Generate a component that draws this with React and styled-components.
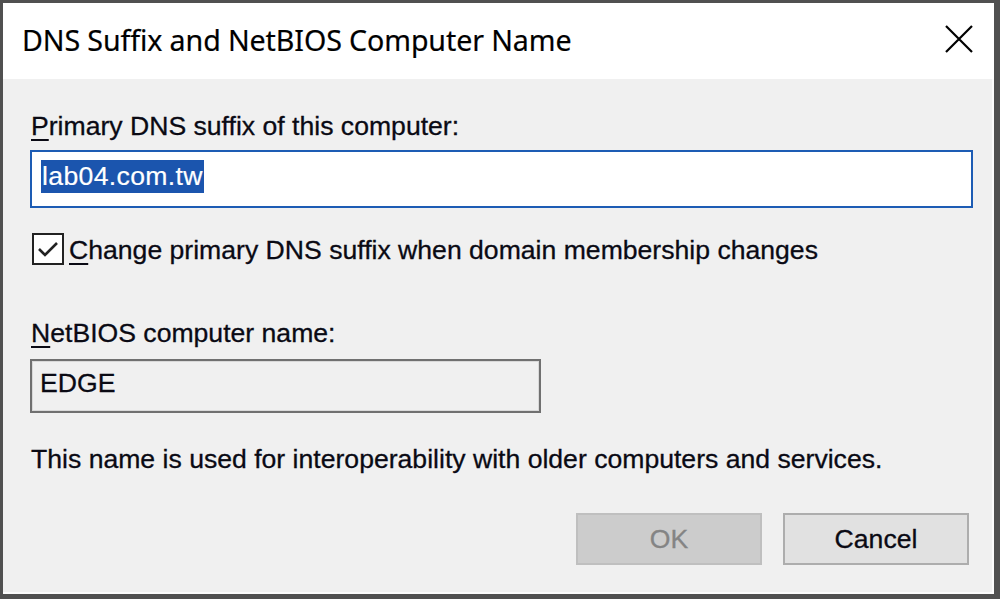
import React from 'react';
import styled, { createGlobalStyle } from 'styled-components';

const GlobalStyle = createGlobalStyle`
  html, body {
    margin: 0;
    padding: 0;
    background: #4d4d4d;
  }
`;

const Window = styled.div`
  width: 1000px;
  height: 599px;
  box-sizing: border-box;
  display: flex;
  flex-direction: column;
  border-style: solid;
  border-color: #505050;
  border-width: 3px 6px 5px 3px;
  background: #f0f0f0;
  box-shadow: inset -2px -2px 0 #fbfbfb;
  overflow: hidden;
`;

const TitleBar = styled.div`
  height: 76px;
  flex: none;
  display: flex;
  align-items: center;
  justify-content: space-between;
  padding: 0 19px 0 19px;
  background: #ffffff;
`;

const Title = styled.div`
  font-family: 'Noto Sans', 'Open Sans', sans-serif;
  font-size: 28.6px;
  letter-spacing: -0.1px;
  color: #000;
  margin-top: -4px;
  -webkit-text-stroke: 0.2px #000;
`;

const CloseButton = styled.button`
  width: 32px;
  height: 32px;
  padding: 0;
  border: none;
  background: none;
  display: flex;
  align-items: center;
  justify-content: center;
  margin-top: -4px;
`;

const Body = styled.div`
  flex: 1;
  display: flex;
  flex-direction: column;
  padding: 32px 25px 0 27px;
  font-family: 'Liberation Sans', Arial, sans-serif;
  font-size: 26.6px;
  color: #0a0a14;
  -webkit-text-stroke: 0.3px #0a0a14;
`;

const Label = styled.div`
  line-height: 30px;
  margin-top: ${p => p.gap || 0}px;
  padding-left: 1px;
`;

const Key = styled.span`
  text-decoration: underline;
  text-decoration-thickness: 2px;
  text-underline-offset: 4px;
`;

const TextField = styled.div`
  margin-top: 9px;
  height: 58px;
  box-sizing: border-box;
  border: 2px solid #1d5cb4;
  background: #fff;
  padding: 8px 0 0 9px;
  width: ${p => p.width}px;
`;

const Selected = styled.span`
  display: inline-block;
  line-height: 33px;
  padding: 0 1px;
  background: #1b55ae;
  color: #fff;
  -webkit-text-stroke: 0.2px #fff;
  letter-spacing: 0.35px;
`;

const CheckRow = styled.label`
  margin-top: 26px;
  display: flex;
  align-items: center;
  gap: 5px;
  line-height: 32px;
`;

const CheckBox = styled.span`
  width: 32px;
  height: 32px;
  box-sizing: border-box;
  border: 2px solid #222;
  background: #fff;
  display: flex;
  align-items: center;
  justify-content: center;
  margin-left: 2px;
  margin-top: -3px;
`;

const ReadOnlyField = styled.div`
  margin-top: 11px;
  width: 511px;
  height: 54px;
  box-sizing: border-box;
  border: 2px solid #707070;
  box-shadow: inset 0 0 0 1px #d9d9d9;
  background: #f0f0f0;
  padding: 7px 0 0 8px;
  line-height: 30px;
`;

const Buttons = styled.div`
  margin-top: 39px;
  display: flex;
  justify-content: flex-end;
  gap: 21px;
`;

const Button = styled.button`
  width: 186px;
  height: 52px;
  box-sizing: border-box;
  font-family: 'Liberation Sans', Arial, sans-serif;
  font-size: 26.6px;
  border: 2px solid ${p => (p.disabled ? '#bfbfbf' : '#adadad')};
  background: ${p => (p.disabled ? '#cccccc' : '#e1e1e1')};
  color: ${p => (p.disabled ? '#848484' : '#0a0a14')};
  -webkit-text-stroke: 0.3px ${p => (p.disabled ? '#848484' : '#0a0a14')};
  padding: 0;
`;

export default function App() {
  return (
    <>
      <GlobalStyle />
      <Window>
        <TitleBar>
          <Title>DNS Suffix and NetBIOS Computer Name</Title>
          <CloseButton>
            <svg width="28" height="28" viewBox="0 0 28 28">
              <path d="M1 1 L27 27 M27 1 L1 27" stroke="#000" strokeWidth="2.2" fill="none" />
            </svg>
          </CloseButton>
        </TitleBar>
        <Body>
          <Label>
            <Key>P</Key>rimary DNS suffix of this computer:
          </Label>
          <TextField width={943}>
            <Selected>lab04.com.tw</Selected>
          </TextField>
          <CheckRow>
            <CheckBox>
              <svg width="26" height="26" viewBox="0 0 26 26">
                <path d="M4 13 L10 19 L22 7" stroke="#222" strokeWidth="2.6" fill="none" />
              </svg>
            </CheckBox>
            <span>
              <Key>C</Key>hange primary DNS suffix when domain membership changes
            </span>
          </CheckRow>
          <Label gap={52}>
            <Key>N</Key>etBIOS computer name:
          </Label>
          <ReadOnlyField>EDGE</ReadOnlyField>
          <Label gap={31}>
            This name is used for interoperability with older computers and services.
          </Label>
          <Buttons>
            <Button disabled>OK</Button>
            <Button>Cancel</Button>
          </Buttons>
        </Body>
      </Window>
    </>
  );
}
